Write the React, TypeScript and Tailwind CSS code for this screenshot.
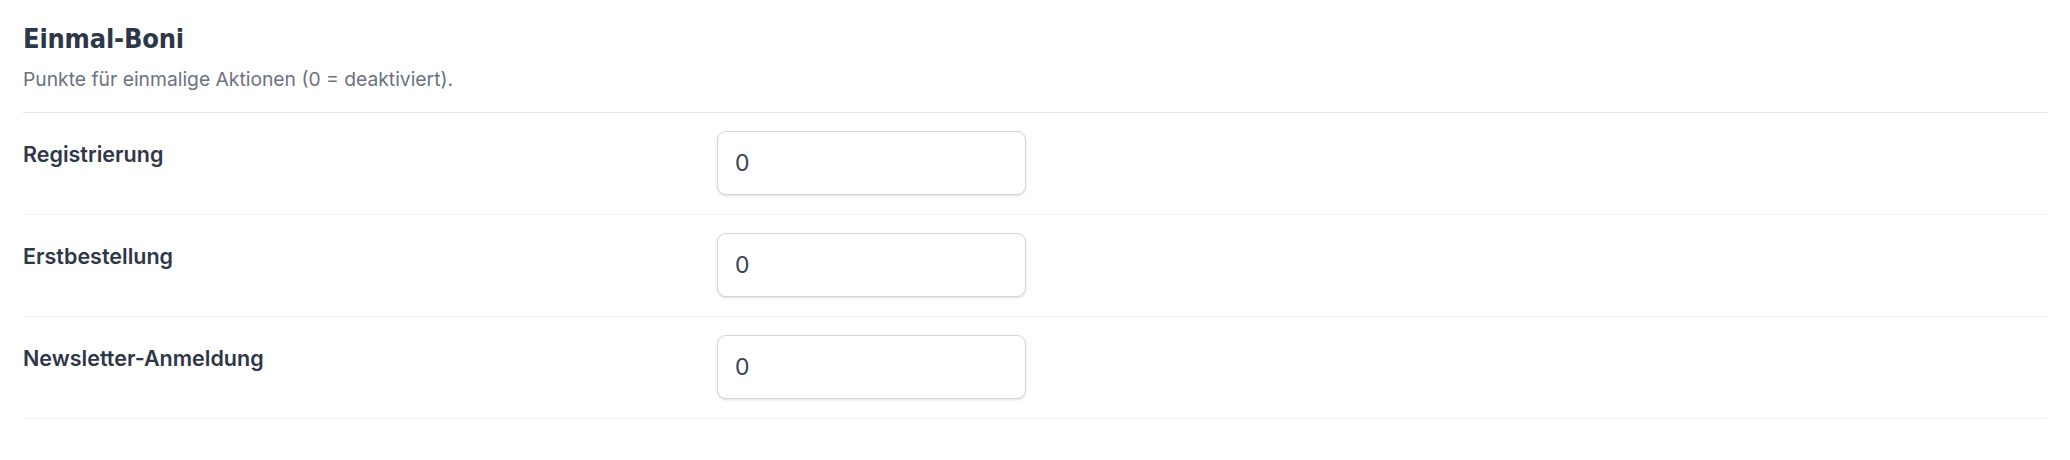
import type { ReactNode } from "react";

/* ---------- Einmal-Boni Einstellungen ---------- */

type BonusField = {
  id: string;
  label: string;
  value: number;
};

const FIELDS: BonusField[] = [
  { id: "registration", label: "Registrierung", value: 0 },
  { id: "first_order", label: "Erstbestellung", value: 0 },
  { id: "newsletter", label: "Newsletter-Anmeldung", value: 0 },
];

function SectionHeader({
  title,
  description,
}: {
  title: string;
  description: ReactNode;
}) {
  return (
    <div className="border-b border-[#e5e7eb] pt-[26px] pb-[21px]">
      <h2 className="font-['DejaVu_Sans_Condensed','DejaVu_Sans',sans-serif] text-[27px] leading-[26px] font-bold tracking-[-0.2px] text-[#2d3748] [font-stretch:condensed]">
        {title}
      </h2>
      <p className="mt-[15px] font-['Inter',sans-serif] text-[19.3px] leading-[24px] text-[#6b7280]">
        {description}
      </p>
    </div>
  );
}

function NumberRow({ field }: { field: BonusField }) {
  return (
    <div className="flex items-start border-b border-[#f2f3f5] pt-[18px] pb-[19px]">
      <label
        htmlFor={field.id}
        className="w-[694px] shrink-0 pt-[9px] font-['Inter',sans-serif] text-[21.5px] leading-[28px] font-semibold text-[#2d3748]"
      >
        {field.label}
      </label>
      <input
        id={field.id}
        type="text"
        inputMode="numeric"
        defaultValue={field.value}
        className="h-[64px] w-[309px] rounded-[9px] border border-[#d4d6db] bg-white px-[17px] font-['Inter',sans-serif] text-[23px] text-[#374151] shadow-sm outline-none"
      />
    </div>
  );
}

export default function App() {
  return (
    <div className="min-h-[460px] w-full bg-white px-[23px]">
      <SectionHeader
        title="Einmal-Boni"
        description="Punkte für einmalige Aktionen (0 = deaktiviert)."
      />
      {FIELDS.map((field) => (
        <NumberRow key={field.id} field={field} />
      ))}
    </div>
  );
}
